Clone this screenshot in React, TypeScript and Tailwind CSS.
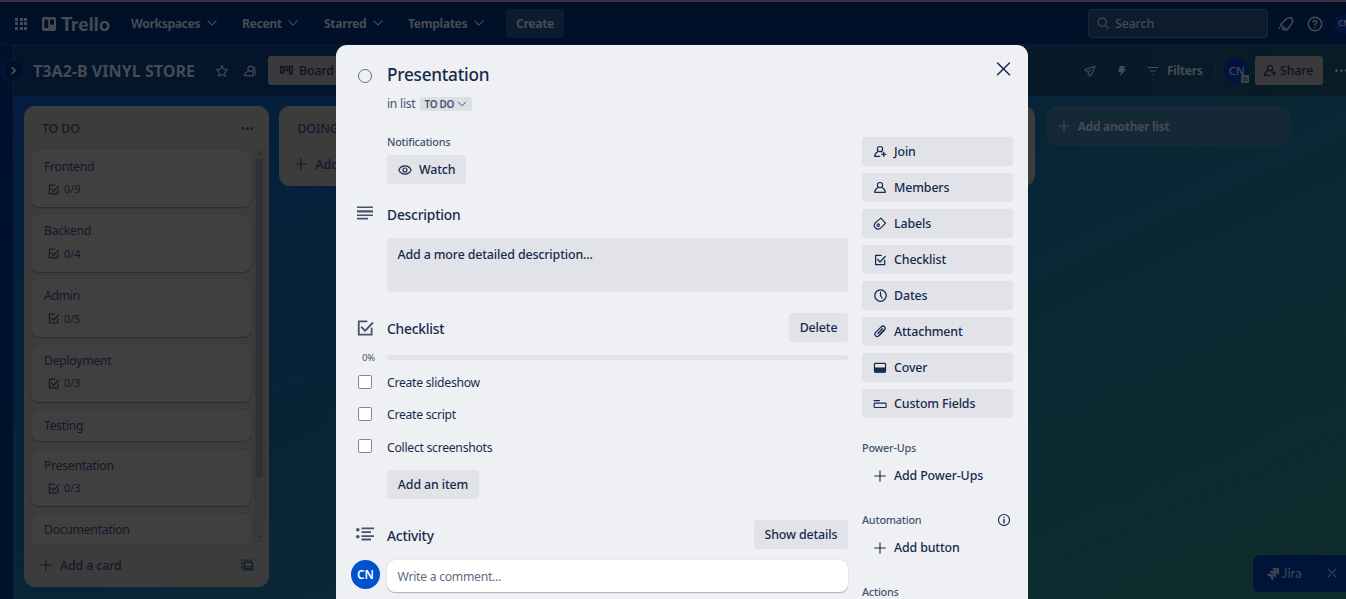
import type { ReactNode } from "react";

const MEDIUM = "pt-[2px] text-[12.4px] font-medium tracking-[-0.13px]";
const BODY = "text-[12.2px] tracking-[-0.27px]";
const BOLD = "pt-[2px] text-[12.2px] font-bold tracking-[-0.38px]";
const SMALL = "text-[10.8px] font-medium tracking-[-0.2px]";

type IconProps = { className?: string; children?: ReactNode };

function Svg({ className = "size-[14px]", children }: IconProps) {
  return (
    <svg
      viewBox="0 0 24 24"
      fill="none"
      stroke="currentColor"
      strokeWidth={2}
      strokeLinecap="round"
      strokeLinejoin="round"
      className={`shrink-0 ${className}`}
    >
      {children}
    </svg>
  );
}

const CheckBoxIcon = ({ className }: IconProps) => (
  <Svg className={className}>
    <path d="M14 4H4.5v16H20v-7.5" strokeWidth={2.2} />
    <path d="M8 11l4 4.5L21 6" strokeWidth={2.2} />
  </Svg>
);
const PlusIcon = ({ className }: IconProps) => (
  <Svg className={className}>
    <path d="M12 3v18M3 12h18" strokeWidth={1.9} />
  </Svg>
);
const ChevronIcon = ({ className }: IconProps) => (
  <Svg className={className}>
    <path d="M5 8.5l7 7 7-7" />
  </Svg>
);
const PersonIcon = ({ className }: IconProps) => (
  <Svg className={className}>
    <circle cx="12" cy="7" r="4.5" />
    <path d="M8.2 11.500C5 13 3 15.500 3 19.500h18c0-4-2-6.500-5.200-8" />
  </Svg>
);
const PersonAddIcon = ({ className }: IconProps) => (
  <Svg className={className}>
    <circle cx="12" cy="7" r="4.5" />
    <path d="M8.200 11.500C5 13 3 15.500 3 19.500h8.500M15.500 12l-2-1M18.500 12.500v7M15 16h7" strokeWidth={2.2} />
  </Svg>
);
const LabelIcon = () => (
  <Svg>
    <path d="M13.500 2l8 8.500-7.800 8c-2.700 2.900-7 2.900-9.500.4-2.600-2.600-2.500-6.600.1-9.300z" />
    <circle cx="9" cy="14" r="2.100" />
  </Svg>
);
const ClockIcon = () => (
  <Svg className="size-[15px]">
    <circle cx="12" cy="12" r="9.2" />
    <path d="M12 6.500V12l2.500 4" />
  </Svg>
);
const ClipIcon = () => (
  <Svg>
    <path
      d="M11 17.500l8.300-8.600c2-2.200 2-4.500.4-6-1.600-1.500-4-1.300-6 .7L5 12.200c-2.300 2.500-2.300 4.900-.7 6.400 1.500 1.500 4.200 1.400 6-.4M8.500 14.500l7.500-8M11.500 16l7-7.500"
      strokeWidth={2.2}
    />
  </Svg>
);
const CoverIcon = () => (
  <Svg>
    <rect x="2.500" y="4" width="19" height="15" rx="1.500" />
    <path d="M3 12h18v6.500H3z" fill="currentColor" />
  </Svg>
);
const FieldsIcon = () => (
  <Svg>
    <path d="M2 6.200h9" />
    <rect x="2" y="10.500" width="20.500" height="7.500" rx="1.500" />
  </Svg>
);
const EyeIcon = () => (
  <Svg className="mb-[2px] size-[14px]">
    <path d="M1.500 12C3.500 7.500 7.300 5 12 5s8.500 2.500 10.500 7c-2 4.500-5.800 7-10.500 7S3.500 16.500 1.500 12z" />
    <circle cx="12" cy="12" r="3.400" />
  </Svg>
);
const InfoIcon = () => (
  <Svg className="size-[14px]">
    <circle cx="12" cy="12" r="9.500" />
    <path d="M12 11v6M12 7.200v.3" strokeWidth={2.4} />
  </Svg>
);

/* ---------- top navigation ---------- */

function NavMenu({ label, className }: { label: string; className: string }) {
  return (
    <div className={`flex shrink-0 items-center justify-between ${className}`}>
      <span className={BOLD}>{label}</span>
      <ChevronIcon className="size-[14px]" />
    </div>
  );
}

function TopNav() {
  return (
    <header className="flex h-[43px] shrink-0 items-center border-b border-[#07193a] bg-[#001029] pt-px pl-[15px] text-[#454a53]">
      <div className="grid shrink-0 grid-cols-3 gap-[1.5px]">
        {Array.from({ length: 9 }, (_, i) => (
          <span key={i} className="size-[3px] bg-[#454a53]" />
        ))}
      </div>
      <svg viewBox="0 0 14 14" className="ml-[15px] size-[14px] shrink-0" fill="none">
        <rect width="14" height="14" rx="2" fill="#454a53" />
        <rect x="2.300" y="2.500" width="3.900" height="8.500" rx=".5" fill="#001029" />
        <rect x="8" y="2.500" width="3.900" height="5.300" rx=".5" fill="#001029" />
      </svg>
      <span className="ml-[5px] w-[70px] shrink-0 pt-[2px] font-['Lato','Noto_Sans',sans-serif] text-[19px] font-black tracking-[0.3px]">
        Trello
      </span>
      <NavMenu label="Workspaces" className="w-[88px]" />
      <NavMenu label="Recent" className="ml-[23px] w-[58px]" />
      <NavMenu label="Starred" className="ml-[24px] w-[61px]" />
      <NavMenu label="Templates" className="ml-[23px] w-[78px]" />
      <div
        className={`ml-[20px] flex h-[29px] w-[58px] shrink-0 items-center justify-center rounded-[3px] bg-[#0b1c30] ${BOLD}`}
      >
        Create
      </div>
      <div className="ml-[524px] flex h-[29px] w-[180px] shrink-0 items-center rounded-[4px] border border-[#1b2839] bg-[#0e1b2d] pl-[7px]">
        <Svg className="mb-px size-[14px]">
          <circle cx="10.500" cy="10.500" r="7" />
          <path d="M16 16l5 5" />
        </Svg>
        <span className={`ml-[5px] ${MEDIUM}`}>Search</span>
      </div>
      <Svg className="ml-[9px] size-[18px]">
        <path d="M13 4.500l6.500-1.300L21 9.500l-7.500 10.300L4.500 13z" />
        <path d="M4 16.500l-1 1M7.500 17.500c0 2 2 3.200 4 2" />
      </Svg>
      <Svg className="ml-[11px] size-[18px]">
        <circle cx="12" cy="12" r="9" />
        <path d="M9.500 9.500c.3-3 5-2.800 5 .1 0 1.900-2.500 1.900-2.500 3.900M12 16.800v.1" />
      </Svg>
      <div className="ml-[10px] flex size-[20px] shrink-0 items-center justify-center rounded-full bg-[#001540] text-[8.5px] font-semibold">
        CN
      </div>
    </header>
  );
}

/* ---------- board ---------- */

function BoardHeader() {
  return (
    <div className="flex h-[51px] shrink-0 items-center bg-[linear-gradient(90deg,#04142b,#05182a_60%,#081c27)] pl-[19px] text-[#454a53]">
      <h1 className="w-[182px] shrink-0 pt-px text-[16.1px] font-bold">T3A2-B VINYL STORE</h1>
      <Svg className="size-[14px]">
        <path d="M12 2.500l2.900 6.300 6.800.8-5 4.700 1.300 6.700-6-3.300L6 21l1.300-6.700-5-4.700 6.800-.8z" />
      </Svg>
      <Svg className="ml-[14px] size-[14px]">
        <circle cx="13" cy="8" r="4.500" />
        <path d="M9.500 12C6 13 3.500 16 2.500 20h16c0-3.500-1.500-6-3.500-7.500M19 5c2 2 2 5 0 7 2 1 3 3 3 5.500" />
      </Svg>
      <div className="ml-[11px] flex h-[29px] w-[90px] shrink-0 items-center rounded-[3px] bg-[#3a3a3c] pl-[12px] text-[#0c131f]">
        <svg
          viewBox="0 0 13 11"
          className="h-[11px] w-[13px] shrink-0"
          fill="none"
          stroke="currentColor"
          strokeWidth="1.300"
        >
          <rect x=".7" y="1.500" width="2.600" height="6.500" />
          <rect x="5.200" y="1.500" width="2.600" height="4" />
          <rect x="9.700" y="1.500" width="2.600" height="7.500" />
        </svg>
        <span className={`ml-[6px] ${MEDIUM}`}>Board</span>
      </div>
      <div className="ml-auto flex shrink-0 items-center">
        <Svg className="size-[14px]">
          <path d="M20.500 4L3 9.500l5.500 4.500L11 20.500l4-3z" />
          <path d="M9 14l4-3.500" />
        </Svg>
        <svg viewBox="0 0 14 14" className="ml-[18px] size-[14px] shrink-0" fill="currentColor">
          <path d="M5 2h5L8.800 5H11l-6 7.500.9-4.500H3z" />
        </svg>
        <Svg className="ml-[17px] size-[14px]">
          <path d="M3 6h18M7 12h10M11 18h2" strokeLinecap="butt" />
        </Svg>
        <span className={`ml-[7px] w-[35px] ${BOLD}`}>Filters</span>
        <span className="ml-[12px] h-[15px] w-px bg-[#152634]" />
        <div className="relative ml-[9px] flex size-[25px] items-center justify-center rounded-full bg-[#001440] text-[11.5px] font-medium tracking-[-0.3px]">
          CN
          <svg viewBox="0 0 8 8" className="absolute right-0 bottom-0 size-[8px]" fill="none">
            <rect width="8" height="8" fill="#3f444e" />
            <path d="M1.500 4L4 2l2.500 2M1.500 6.300L4 4.500l2.500 1.800" stroke="#0b1626" strokeWidth=".9" />
          </svg>
        </div>
        <div className="ml-[6px] flex h-[29px] w-[68px] items-center rounded-[3px] bg-[#3a3a3c] pl-[8px] text-[#0c131f]">
          <PersonAddIcon />
          <span className={`ml-[3px] ${MEDIUM}`}>Share</span>
        </div>
        <div className="ml-[12px] flex w-[11px] gap-[2px] overflow-hidden">
          <span className="size-[3px] shrink-0 rounded-full bg-current" />
          <span className="size-[3px] shrink-0 rounded-full bg-current" />
          <span className="size-[3px] shrink-0 rounded-full bg-current" />
        </div>
      </div>
    </div>
  );
}

const cards = [
  { title: "Frontend", count: "0/9" },
  { title: "Backend", count: "0/4" },
  { title: "Admin", count: "0/5" },
  { title: "Deployment", count: "0/3" },
  { title: "Testing" },
  { title: "Presentation", count: "0/3" },
  { title: "Documentation" },
];

function TodoList() {
  return (
    <section className="flex h-[481px] w-[245px] shrink-0 flex-col rounded-[11px] bg-[#3c3c3d] text-[#11192a]">
      <div className="flex h-[42px] shrink-0 items-center justify-between pt-[3px] pr-[16px] pl-[18px]">
        <h2 className={MEDIUM}>TO DO</h2>
        <div className="flex gap-[2px]">
          <span className="size-[2.5px] rounded-full bg-[#151b27]" />
          <span className="size-[2.5px] rounded-full bg-[#151b27]" />
          <span className="size-[2.5px] rounded-full bg-[#151b27]" />
        </div>
      </div>
      <div className="flex h-[395px] shrink-0 justify-between overflow-hidden pr-[4px] pl-[7px]">
        <div className="flex w-[220px] flex-col gap-[7.2px] pt-[1.6px]">
          {cards.map((c) => (
            <article
              key={c.title}
              className="flex shrink-0 flex-col rounded-[8px] bg-[#404040] px-[13px] pb-[9.6px] shadow-[0_1px_1px_#2c2d30,0_0_1px_#2c2d30] last:min-h-[58px]"
            >
              <span className={`h-[23px] pt-[8px] leading-[18px] ${BODY}`}>{c.title}</span>
              {c.count && (
                <span className="flex h-[25px] items-center gap-[4px] pt-[8px] pl-[3px] text-[10.8px]">
                  <CheckBoxIcon className="size-[13px]" />
                  {c.count}
                </span>
              )}
            </article>
          ))}
        </div>
        <div className="flex w-[11px] flex-col items-center justify-between bg-[#39393b] py-[4px]">
          <span className="border-x-[3px] border-b-[3px] border-x-transparent border-b-[#2e2e32]" />
          <span className="mb-[56px] h-[318px] w-[7px] bg-[#303035]" />
          <span className="border-x-[3px] border-t-[3px] border-x-transparent border-t-[#2e2e32]" />
        </div>
      </div>
      <div className="flex flex-1 items-center px-[15px]">
        <PlusIcon />
        <span className={`ml-[7px] ${MEDIUM}`}>Add a card</span>
        <Svg className="ml-auto size-[14px]">
          <path d="M7.500 7.500H21v13H7.500z" strokeWidth={2.2} />
          <path d="M10.500 15h7.500v3h-7.500z" strokeWidth={1.5} />
          <path d="M3.500 3.500h2M9 3.500h3.500M16 3.500h3.500M3.500 8v3M3.500 14.500v3.500" strokeWidth={2.2} />
        </Svg>
      </div>
    </section>
  );
}

function ShortList({ title }: { title: string }) {
  return (
    <section className="flex h-[80px] w-[245px] shrink-0 flex-col rounded-[11px] bg-[#3c3c3d] text-[#11192a]">
      <div className="flex h-[42px] items-center pt-[3px] pl-[18px]">
        <h2 className={MEDIUM}>{title}</h2>
      </div>
      <div className="flex h-[32px] items-center pl-[15px]">
        <PlusIcon />
        <span className={`ml-[7px] ${MEDIUM}`}>Add a card</span>
      </div>
    </section>
  );
}

function Board() {
  return (
    <div className="flex flex-1 items-start gap-[10.4px] overflow-hidden pt-[10px] pl-[10px]">
      <TodoList />
      <ShortList title="DOING" />
      <ShortList title="TESTING" />
      <ShortList title="DONE" />
      <div className="flex h-[40px] w-[245px] shrink-0 items-center rounded-[11px] bg-[#152836] pl-[11px] text-[#454a50]">
        <PlusIcon />
        <span className={`ml-[7px] ${BOLD}`}>Add another list</span>
      </div>
    </div>
  );
}

/* ---------- card dialog ---------- */

const actions: { label: string; icon: ReactNode }[] = [
  { label: "Join", icon: <PersonAddIcon /> },
  { label: "Members", icon: <PersonIcon /> },
  { label: "Labels", icon: <LabelIcon /> },
  { label: "Checklist", icon: <CheckBoxIcon /> },
  { label: "Dates", icon: <ClockIcon /> },
  { label: "Attachment", icon: <ClipIcon /> },
  { label: "Cover", icon: <CoverIcon /> },
  { label: "Custom Fields", icon: <FieldsIcon /> },
];

function SideLabel({ children }: { children: ReactNode }) {
  return (
    <div className={`mt-[22px] flex h-[16px] items-center justify-between pr-[2px] text-[#44546f] ${SMALL}`}>
      {children}
    </div>
  );
}

function SideRow({ icon, label }: { icon: ReactNode; label: string }) {
  return (
    <div className="flex h-[29px] items-center pl-[11px]">
      <span className="flex w-[14px] justify-center">{icon}</span>
      <span className={`ml-[7px] ${MEDIUM}`}>{label}</span>
    </div>
  );
}

function SectionHead({
  icon,
  title,
  button,
  className,
}: {
  icon: ReactNode;
  title: string;
  button?: string;
  className: string;
}) {
  return (
    <div className={`flex h-[29px] items-center ${className}`}>
      <span className="flex w-[36px] justify-start text-[#44546f]">{icon}</span>
      <h3 className="pt-[3px] text-[13.8px] font-medium tracking-[-0.2px]">{title}</h3>
      {button && (
        <button className={`ml-auto h-[29px] rounded-[3px] bg-[#e2e3e8] px-[10.6px] ${MEDIUM}`}>{button}</button>
      )}
    </div>
  );
}

function CardDialog() {
  return (
    <div className="absolute top-[45px] left-[336px] flex h-[554px] w-[692px] overflow-hidden rounded-t-[11px] bg-[#eff0f4] pl-[15px] text-[#172b4d]">
      <main className="flex w-[497px] flex-col pt-[17px]">
        <div className="flex h-[26px] items-center">
          <span className="mt-[2px] ml-[7px] size-[14px] rounded-full border-[1.5px] border-[#5d6b85]" />
          <h2 className="ml-[15px] text-[17.2px] font-medium tracking-[-0.25px]">Presentation</h2>
        </div>
        <div className={`mt-[8px] ml-[36px] flex h-[16px] items-center text-[#44546f] ${BODY}`}>
          in list
          <span className="ml-[5px] flex h-[14px] w-[52px] items-center justify-between rounded-[3px] bg-[#dcdfe4] px-[4px] text-[10px] font-semibold tracking-[-0.3px]">
            <span className="pt-px">TO DO</span>
            <ChevronIcon className="size-[12px]" />
          </span>
        </div>
        <div className={`mt-[22px] ml-[36px] flex h-[16px] items-center text-[#44546f] ${SMALL}`}>Notifications</div>
        <button
          className={`mt-[5px] ml-[36px] flex h-[29px] w-[79px] items-center rounded-[3px] bg-[#e2e3e8] pl-[11px] ${MEDIUM}`}
        >
          <EyeIcon />
          <span className="ml-[7px]">Watch</span>
        </button>

        <SectionHead
          className="mt-[15px]"
          title="Description"
          icon={
            <svg viewBox="0 0 16 14" className="mb-[2px] ml-[6px] h-[14px] w-[16px]" fill="currentColor">
              <path d="M0 .5h16v1.600H0zM0 4.200h16v2.200H0zM0 8.400h16V10H0zM0 11.800h11v1.700H0z" />
            </svg>
          }
        />
        <div className="mt-[10px] ml-[36px] h-[54px] w-[461px] rounded-[3px] bg-[#e2e3e8] px-[10.5px] pt-[8px] text-[12.4px] leading-[18px] font-medium tracking-[-0.13px]">
          Add a more detailed description...
        </div>

        <SectionHead
          className="mt-[21px]"
          title="Checklist"
          button="Delete"
          icon={<CheckBoxIcon className="ml-[4px] size-[20px]" />}
        />
        <div className="mt-[9px] flex h-[13px] items-center">
          <span className="w-[36px] pt-[2px] pl-[11px] text-[9.5px] tracking-[-0.3px] text-[#44546f]">0%</span>
          <span className="h-[5px] flex-1 rounded-full bg-[#e2e3e8]" />
        </div>
        <div className="mt-[2px] flex flex-col">
          {["Create slideshow", "Create script", "Collect screenshots"].map((t) => (
            <label key={t} className={`flex h-[32.4px] items-center ${BODY}`}>
              <span className="mr-[15px] mb-px ml-[7px] size-[14px] rounded-[2px] border border-[#7c899f] bg-white" />
              <span className="pt-[2px]">{t}</span>
            </label>
          ))}
        </div>
        <button className={`mt-[7px] ml-[36px] h-[29px] w-[92px] shrink-0 rounded-[3px] bg-[#e2e3e8] ${MEDIUM}`}>
          Add an item
        </button>

        <SectionHead
          className="mt-[21px] shrink-0"
          title="Activity"
          button="Show details"
          icon={
            <svg viewBox="0 0 18 14" className="mb-px ml-[5px] h-[14px] w-[18px]" fill="currentColor">
              <circle cx="1.800" cy="2.700" r="1.800" />
              <circle cx="1.800" cy="9.700" r="1.800" />
              <path d="M5.500.6H18v1.700H5.500zM5.500 4.200h9.500v1.900H5.500zM5.500 8.200H18v1.700H5.500zM5.500 11.600h9.500v1.800H5.500z" />
            </svg>
          }
        />
        <div className="mt-[11px] flex shrink-0">
          <span className="flex size-[29px] items-center justify-center rounded-full bg-[#0052cc] text-[11.8px] font-semibold text-white">
            CN
          </span>
          <div
            className={`ml-[7px] flex h-[32px] flex-1 items-center rounded-[8px] bg-white px-[10.5px] pt-[2px] text-[#5e6c84] shadow-[0_1px_1px_#a9b2c2,0_0_1px_#a9b2c2] ${BODY}`}
          >
            Write a comment...
          </div>
        </div>
      </main>

      <aside className="ml-[14px] flex w-[151px] flex-col">
        <div className="flex h-[92px] shrink-0 justify-end pt-[14px]">
          <Svg className="size-[19px]">
            <path d="M4.500 5l15 15M19.500 5l-15 15" strokeWidth={1.9} />
          </Svg>
        </div>
        <div className="flex shrink-0 flex-col gap-[7px]">
          {actions.map((a) => (
            <div key={a.label} className="rounded-[3px] bg-[#e2e3e8]">
              <SideRow icon={a.icon} label={a.label} />
            </div>
          ))}
        </div>
        <SideLabel>Power-Ups</SideLabel>
        <div className="mt-[5px]">
          <SideRow icon={<PlusIcon />} label="Add Power-Ups" />
        </div>
        <SideLabel>
          Automation
          <span className="text-[#172b4d]">
            <InfoIcon />
          </span>
        </SideLabel>
        <div className="mt-[5px]">
          <SideRow icon={<PlusIcon />} label="Add button" />
        </div>
        <SideLabel>Actions</SideLabel>
      </aside>
    </div>
  );
}

export default function App() {
  return (
    <div className="relative flex h-[599px] w-[1346px] flex-col overflow-hidden bg-[linear-gradient(155deg,#041b45_0%,#05203c_22%,#082536_50%,#0b2a32_75%,#0f2d2c_100%)] font-['Noto_Sans','Open_Sans',sans-serif]">
      <div className="h-[2px] shrink-0 bg-[#3c3045]" />
      <TopNav />
      <div className="flex min-h-0 flex-1">
        <div className="relative w-[14px] shrink-0 border-r border-[#0a2040] bg-[#00112e]">
          <span className="absolute top-[14px] left-[2px] flex size-[23px] items-center justify-center rounded-full border border-[#0a1c3c] bg-[#001029] text-[#555a62]">
            <Svg className="size-[13px]">
              <path d="M9.500 6.500L15 12l-5.500 5.500" strokeWidth={2.8} />
            </Svg>
          </span>
        </div>
        <div className="flex min-w-0 flex-1 flex-col">
          <BoardHeader />
          <Board />
        </div>
      </div>
      <CardDialog />
      <div className="absolute right-0 bottom-[7px] flex h-[37px] w-[93px] items-center rounded-l-[7px] bg-[#00143a] pl-[14px] text-[#3f4650]">
        <svg viewBox="0 0 12 12" className="size-[12px] shrink-0" fill="currentColor">
          <path d="M5.500 0H12v6.500C10 6.500 9.300 5 9.300 2.800 7 2.800 5.500 2 5.500 0z" />
          <path d="M2.800 2.900h6.300v6.300C7.300 9.200 6.500 8 6.500 5.500 4 5.500 2.800 4.800 2.800 2.900z" />
          <path d="M0 5.700h6.300V12C4.500 12 3.700 10.800 3.700 8.400 1.200 8.400 0 7.700 0 5.700z" />
        </svg>
        <span className="ml-[3px] font-['Lato','Noto_Sans',sans-serif] text-[13px]">Jira</span>
        <Svg className="mr-[7px] mb-[2px] ml-auto size-[14px]">
          <path d="M5 5l14 14M19 5L5 19" />
        </Svg>
      </div>
    </div>
  );
}
